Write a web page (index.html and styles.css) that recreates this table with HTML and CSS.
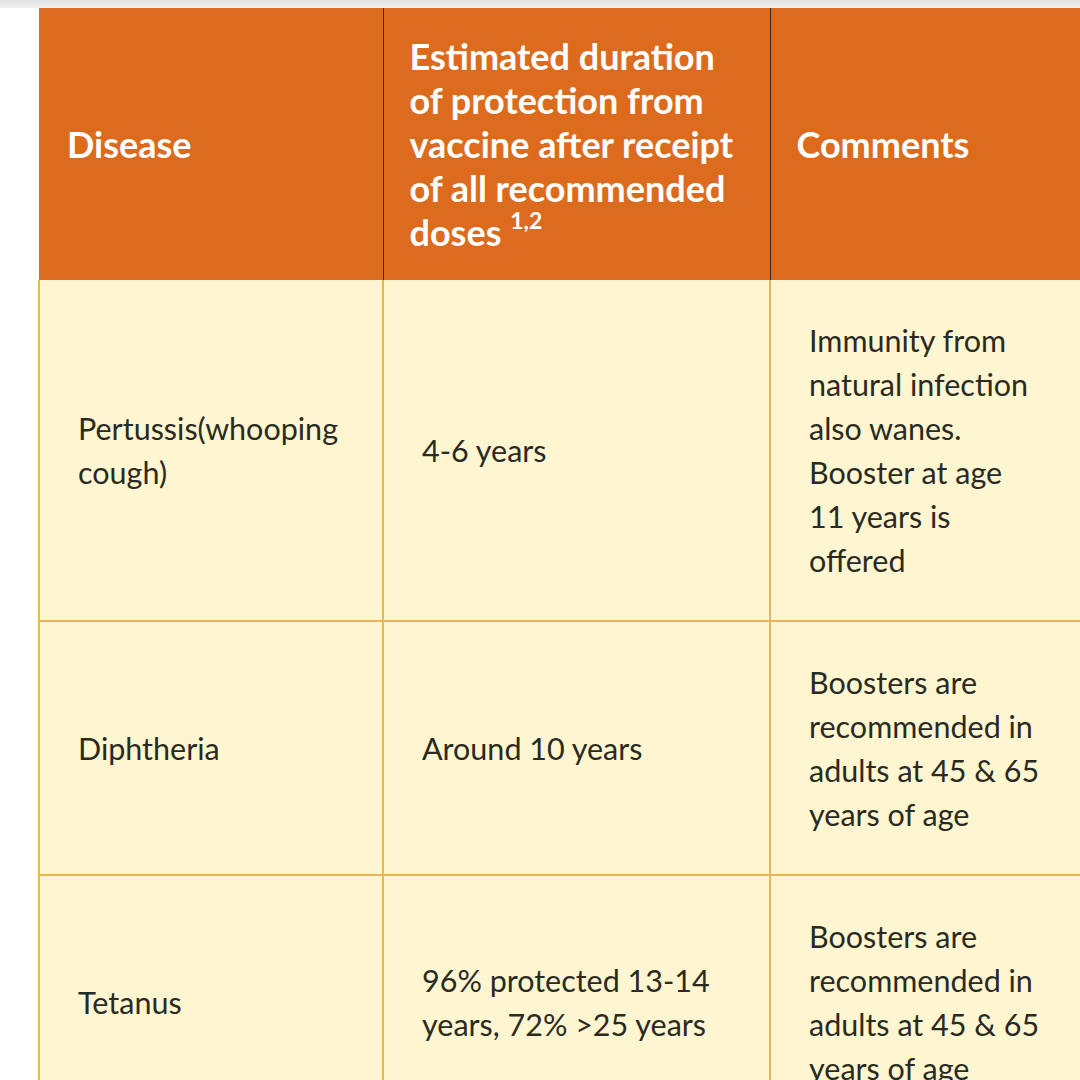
FILE: index.html
```html
<!DOCTYPE html>
<html>
<head>
<meta charset="utf-8">
<link rel="stylesheet" href="styles.css">
</head>
<body>
<div class="topshade"></div>
<div class="wrap">
<table class="vt">
  <colgroup>
    <col class="c1"><col class="c2"><col class="c3">
  </colgroup>
  <thead>
    <tr>
      <th>Disease</th>
      <th>Estimated duration of protection from vaccine after receipt of all recommended doses <sup>1,2</sup></th>
      <th>Comments</th>
    </tr>
  </thead>
  <tbody>
    <tr>
      <td>Pertussis(whooping cough)</td>
      <td>4-6 years</td>
      <td>Immunity from<br>natural infection<br>also wanes.<br>Booster at age<br>11 years is<br>offered</td>
    </tr>
    <tr>
      <td>Diphtheria</td>
      <td>Around 10 years</td>
      <td>Boosters are<br>recommended in<br>adults at 45 &amp; 65<br>years of age</td>
    </tr>
    <tr>
      <td>Tetanus</td>
      <td>96% protected 13-14 years, 72% &gt;25 years</td>
      <td>Boosters are<br>recommended in<br>adults at 45 &amp; 65<br>years of age</td>
    </tr>
  </tbody>
</table>
</div>
</body>
</html>
```
FILE: styles.css
```css
html, body {
  margin: 0;
  padding: 0;
  background: #ffffff;
  overflow: hidden;
}
body {
  width: 1080px;
  height: 1080px;
  font-family: Lato, "Liberation Sans", sans-serif;
}
.topshade {
  height: 8px;
  background: linear-gradient(#e2e2e2, #f2f2f2);
}
.wrap {
  padding-left: 38px;
}
.vt {
  border-collapse: collapse;
  table-layout: fixed;
  width: 1120px;
}
.c1 { width: 344px; }
.c2 { width: 387px; }
.c3 { width: 389px; }
.vt th {
  background: #dc6b1e;
  color: #ffffff;
  font-weight: 700;
  font-size: 36px;
  line-height: 44px;
  text-align: left;
  vertical-align: middle;
  padding: 26px 24px 26px 26px;
  border-left: 1px solid #3b2a1c;
}
.vt th:first-child {
  border-left: none;
  padding-left: 28px;
}
.vt th sup {
  font-size: 23px;
  line-height: 0;
  vertical-align: 17px;
}
.vt td {
  background: #fef6d1;
  color: #2b2a22;
  font-size: 30.5px;
  line-height: 44px;
  vertical-align: middle;
  padding: 38px 20px 38px 38px;
  border: 2px solid #ebb556;
}
.vt td:nth-child(3) {
  padding-right: 40px;
}
.vt tbody tr:first-child td {
  border-top: none;
}
```
